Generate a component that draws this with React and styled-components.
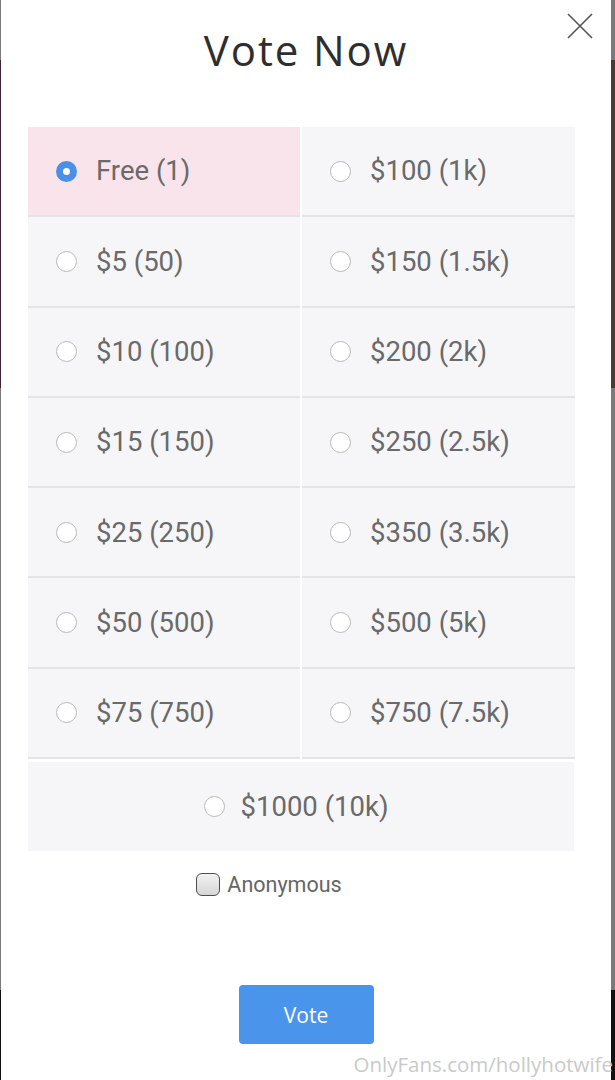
import React, { useState } from "react";
import styled, { createGlobalStyle } from "styled-components";

const Global = createGlobalStyle`
  html, body { margin: 0; padding: 0; }
  body {
    width: 615px;
    height: 1080px;
    overflow: hidden;
    background:
      linear-gradient(to bottom, #7a7a7a 0, #7a7a7a 60px, transparent 60px, transparent 388px, #7a7a7a 388px, #7a7a7a 990px, #111 990px),
      linear-gradient(to right, #3b2230 0, #3b2230 4px, #4a3a33 4px);
  }
`;

const Modal = styled.div`
  position: relative;
  margin-left: 1px;
  width: 610px;
  height: 1080px;
  background: #fff;
  display: flex;
  flex-direction: column;
  align-items: stretch;
  box-sizing: border-box;
  padding-top: 24px;
`;

const Close = styled.button`
  position: absolute;
  top: 13px;
  right: 17px;
  width: 28px;
  height: 27px;
  padding: 0;
  border: 0;
  background: none;
  cursor: pointer;
`;

const Title = styled.h1`
  margin: 0;
  text-align: center;
  font-family: "Open Sans", sans-serif;
  font-weight: 400;
  font-size: 42px;
  line-height: 52px;
  letter-spacing: 1.9px;
  color: #2e2e2e;
`;

const Grid = styled.div`
  margin: 51px 35px 0 27px;
  display: grid;
  grid-template-columns: 272px 273px;
  column-gap: 2px;
`;

const Cell = styled.label`
  height: 90.3px;
  box-sizing: border-box;
  border-bottom: 2px solid #e4e4e6;
  background: ${(p) => (p.$active ? "#f8e4ea" : "#f6f6f8")};
  display: flex;
  align-items: center;
  gap: 19px;
  padding-left: 28px;
  cursor: pointer;
`;

const WideCell = styled.label`
  margin: 3px 37px 0 27px;
  height: 89px;
  background: ${(p) => (p.$active ? "#f8e4ea" : "#f6f6f8")};
  display: flex;
  align-items: center;
  justify-content: center;
  gap: 16px;
  padding-right: 10px;
  cursor: pointer;
`;

const Radio = styled.span`
  width: 21px;
  height: 21px;
  box-sizing: border-box;
  border-radius: 50%;
  flex-shrink: 0;
  background: ${(p) => (p.$checked ? "#4a90e9" : "#fff")};
  border: ${(p) => (p.$checked ? "none" : "1.5px solid #b9b9b9")};
  display: flex;
  align-items: center;
  justify-content: center;
  &::after {
    content: "";
    width: 7px;
    height: 7px;
    border-radius: 50%;
    background: #fff;
    display: ${(p) => (p.$checked ? "block" : "none")};
  }
`;

const OptionText = styled.span`
  font-family: Roboto, "Liberation Sans", sans-serif;
  font-size: 27.5px;
  color: #6a6a6a;
  line-height: 1;
`;

const AnonRow = styled.label`
  margin-top: 22px;
  display: flex;
  justify-content: center;
  align-items: center;
  gap: 7px;
  padding-right: 74px;
  cursor: pointer;
`;

const Check = styled.span`
  width: 24px;
  height: 23px;
  box-sizing: border-box;
  border: 1.5px solid #4e4e4e;
  border-radius: 6px;
  background: linear-gradient(to bottom, #f2f2f2, #d6d6d6);
`;

const AnonText = styled.span`
  font-family: Roboto, "Liberation Sans", sans-serif;
  font-size: 21.5px;
  color: #666;
  line-height: 1;
`;

const VoteButton = styled.button`
  margin: 89px auto 0;
  width: 135px;
  height: 59px;
  border: 0;
  border-radius: 4px;
  background: #4a94ec;
  color: #fff;
  font-family: "Open Sans", sans-serif;
  font-size: 21px;
  cursor: pointer;
`;

const Watermark = styled.div`
  position: absolute;
  right: -2px;
  bottom: 2px;
  font-family: "Open Sans", sans-serif;
  font-size: 20.5px;
  color: #cacaca;
  white-space: nowrap;
`;

const left = ["Free (1)", "$5 (50)", "$10 (100)", "$15 (150)", "$25 (250)", "$50 (500)", "$75 (750)"];
const right = ["$100 (1k)", "$150 (1.5k)", "$200 (2k)", "$250 (2.5k)", "$350 (3.5k)", "$500 (5k)", "$750 (7.5k)"];

export default function App() {
  const [sel, setSel] = useState("Free (1)");
  const cells = [];
  left.forEach((l, i) => {
    cells.push(l, right[i]);
  });
  return (
    <>
      <Global />
      <Modal>
        <Close aria-label="close">
          <svg width="28" height="27" viewBox="0 0 28 27">
            <path d="M2 1 L26 25 M26 1 L2 25" stroke="#555" strokeWidth="1.6" fill="none" />
          </svg>
        </Close>
        <Title>Vote Now</Title>
        <Grid>
          {cells.map((c) => (
            <Cell key={c} $active={sel === c} onClick={() => setSel(c)}>
              <Radio $checked={sel === c} />
              <OptionText>{c}</OptionText>
            </Cell>
          ))}
        </Grid>
        <WideCell $active={sel === "$1000 (10k)"} onClick={() => setSel("$1000 (10k)")}>
          <Radio $checked={sel === "$1000 (10k)"} />
          <OptionText>$1000 (10k)</OptionText>
        </WideCell>
        <AnonRow>
          <Check />
          <AnonText>Anonymous</AnonText>
        </AnonRow>
        <VoteButton>Vote</VoteButton>
        <Watermark>OnlyFans.com/hollyhotwife</Watermark>
      </Modal>
    </>
  );
}
